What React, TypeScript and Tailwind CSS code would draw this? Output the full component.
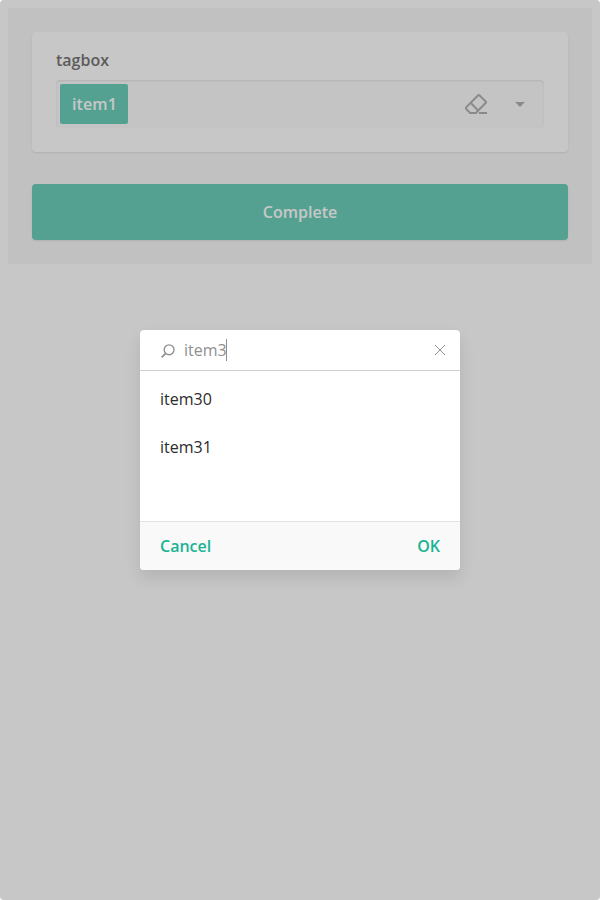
import React from "react";

function EraserIcon() {
  return (
    <svg width="24" height="24" viewBox="0 0 24 24" fill="none" stroke="#848484" strokeWidth="2">
      <path d="M15.4 3.2 21.8 9.6Q22.4 10.2 21.8 10.8L11.8 21H6.2L2.3 17.1Q1.5 16.1 2.3 15.1L14.2 3.2Q14.8 2.6 15.4 3.2Z" strokeLinejoin="round" />
      <path d="M6.6 10.8 14 18.4" />
      <path d="M14.8 21H23" />
    </svg>
  );
}

function SearchIcon() {
  return (
    <svg width="16" height="16" viewBox="0 0 16 16" fill="none" stroke="#909090" strokeWidth="1.4">
      <circle cx="9.1" cy="6.8" r="4.9" />
      <path d="M5.7 10.3 1.6 14.4" strokeWidth="1.7" />
    </svg>
  );
}

function CloseIcon() {
  return (
    <svg width="16" height="16" viewBox="0 0 16 16" fill="none" stroke="#909090" strokeWidth="1">
      <path d="M3 3 13 13M13 3 3 13" />
    </svg>
  );
}

function Survey() {
  return (
    <div className="p-2">
      <main className="h-64 bg-[#f3f3f3] p-6">
        <section className="h-[120px] rounded bg-white px-6 pt-4 shadow-[0_1px_2px_rgba(0,0,0,0.15)]">
          <h5 className="h-8 font-semibold leading-6 text-[#262626]">tagbox</h5>
          <div className="flex h-12 items-center rounded bg-[#f9f9f9] pl-1 pr-4 shadow-[inset_0_1px_2px_rgba(0,0,0,0.15)]">
            <span className="flex h-10 w-[68px] items-center rounded-xs bg-[#19b394] pl-3 font-semibold tracking-[0.1px] text-white">
              item1
            </span>
            <span className="ml-auto mr-6">
              <EraserIcon />
            </span>
            <svg width="16" height="16" viewBox="0 0 16 16" fill="#848484">
              <path d="M3 6H13L8 11Z" />
            </svg>
          </div>
        </section>
        <button className="mt-8 h-14 w-full rounded bg-[#19b394] font-semibold text-white shadow-[0_1px_2px_rgba(0,0,0,0.15)]">
          Complete
        </button>
      </main>
    </div>
  );
}

function Popup() {
  return (
    <div className="flex h-60 w-80 flex-col overflow-hidden rounded bg-white shadow-[0_8px_16px_rgba(0,0,0,0.1)]">
      <div className="flex h-[41px] items-center border-b border-[#d0d0d0] pl-5 pr-3 text-[#909090]">
        <span className="mt-0.5">
          <SearchIcon />
        </span>
        <span className="ml-2 leading-6">item3</span>
        <i className="-ml-px h-[22px] w-px bg-[#909090]" />
        <span className="ml-auto">
          <CloseIcon />
        </span>
      </div>
      <ul className="grow pt-1 text-[#2c2c2c]">
        <li className="flex h-12 items-center px-5">item30</li>
        <li className="flex h-12 items-center px-5">item31</li>
      </ul>
      <div className="flex h-[49px] items-center justify-between border-t border-[#e3e3e3] bg-[#f9f9f9] px-5 font-semibold text-[#19b394]">
        <button>Cancel</button>
        <button>OK</button>
      </div>
    </div>
  );
}

export default function App() {
  return (
    <div className="relative h-[900px] w-[600px] overflow-hidden bg-white text-base font-['Open_Sans',sans-serif]">
      <Survey />
      <div className="absolute inset-0 flex items-center justify-center rounded bg-[#909090]/50">
        <Popup />
      </div>
    </div>
  );
}
